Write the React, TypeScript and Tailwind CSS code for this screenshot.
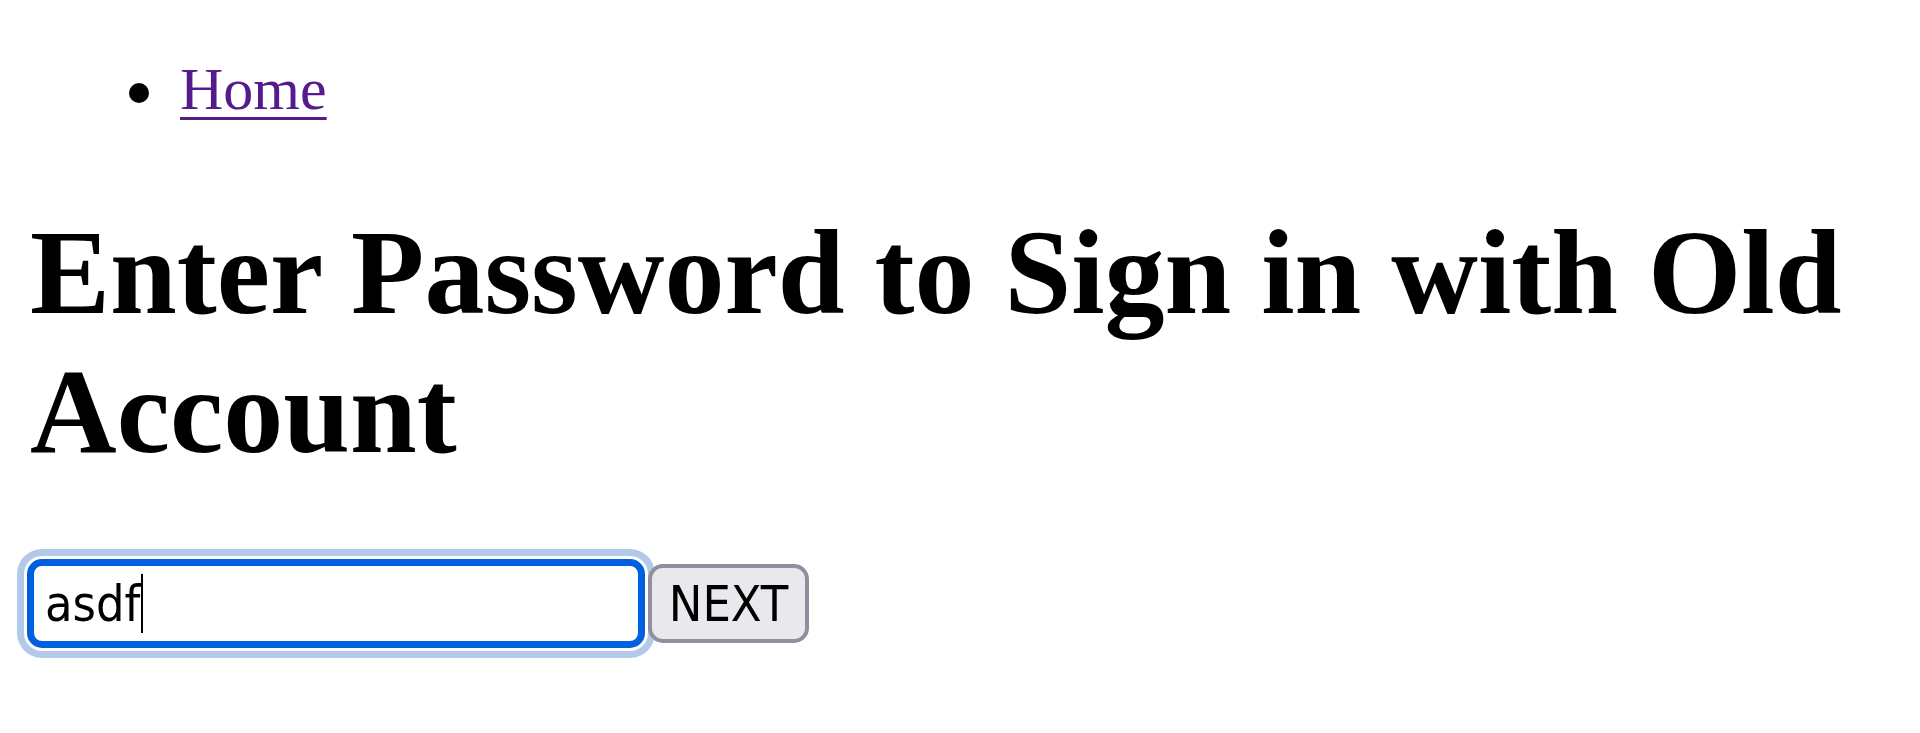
export default function App() {
  return (
    <main className="min-h-screen bg-white px-[30px] text-black font-['Liberation_Serif',serif]">
      {/* nav */}
      <ul className="list-none pl-[150px] pt-[55px] text-[60px] leading-[69px]">
        <li className="flex items-center">
          <span className="ml-[-51px] mr-[31px] mt-[7px] h-[20px] w-[20px] shrink-0 rounded-full bg-black" />
          <a href="#" className="text-[#551a8b] underline decoration-[3px] underline-offset-[8px]">
            Home
          </a>
        </li>
      </ul>

      <h1 className="mt-[79px] text-[120px] font-bold leading-[139px]">
        Enter Password to Sign in with Old Account
      </h1>

      {/* password form */}
      <form className="ml-[-3px] mt-[78px] flex items-center gap-[3px] font-['DejaVu_Sans',sans-serif] font-stretch-condensed text-[50px]">
        <div className="flex h-[89px] w-[618px] items-center rounded-[15px] border-[7px] border-[#0060df] bg-white pl-[11px] shadow-[0_0_0_3px_#ffffff,0_0_0_10px_#b3c9ea]">
          <span className="leading-[60px]">asdf</span>
          <span className="ml-[1px] h-[59px] w-[2px] bg-black" />
        </div>
        <button
          type="button"
          className="relative h-[79px] w-[161px] rounded-[15px] border-[4px] border-[#8f8f9d] bg-[#e9e9ed] leading-[60px]"
        >
          NEXT
        </button>
      </form>
    </main>
  )
}
